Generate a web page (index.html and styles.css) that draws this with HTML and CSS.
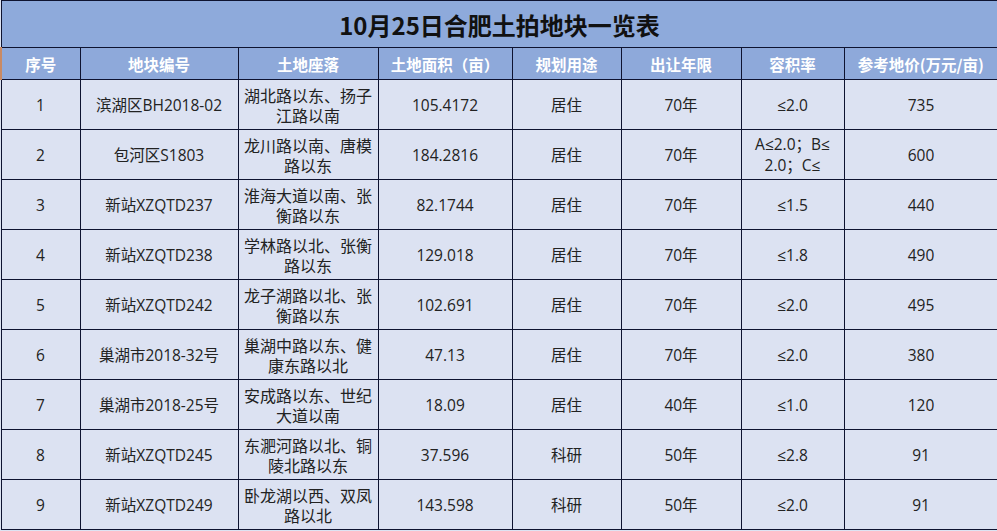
FILE: index.html
```html
<!DOCTYPE html>
<html lang="zh-CN">
<head>
<meta charset="utf-8">
<title>10月25日合肥土拍地块一览表</title>
<link rel="stylesheet" href="styles.css">
</head>
<body>
<table class="land">
  <colgroup>
    <col class="c1"><col class="c2"><col class="c3"><col class="c4"><col class="c5"><col class="c6"><col class="c7"><col class="c8">
  </colgroup>
  <thead>
    <tr class="title-row"><th colspan="8" class="title">10月25日合肥土拍地块一览表</th></tr>
    <tr class="head-row">
      <th class="first">序号</th><th>地块编号</th><th>土地座落</th><th>土地面积（亩）</th><th>规划用途</th><th>出让年限</th><th>容积率</th><th class="last">参考地价(万元/亩)</th>
    </tr>
  </thead>
  <tbody>
    <tr><td>1</td><td>滨湖区BH2018-02</td><td class="loc">湖北路以东、扬子江路以南</td><td>105.4172</td><td>居住</td><td>70年</td><td>≤2.0</td><td>735</td></tr>
    <tr><td>2</td><td>包河区S1803</td><td class="loc">龙川路以南、唐模路以东</td><td>184.2816</td><td>居住</td><td>70年</td><td class="far">A≤2.0；B≤<br>2.0；C≤</td><td>600</td></tr>
    <tr><td>3</td><td>新站XZQTD237</td><td class="loc">淮海大道以南、张衡路以东</td><td>82.1744</td><td>居住</td><td>70年</td><td>≤1.5</td><td>440</td></tr>
    <tr><td>4</td><td>新站XZQTD238</td><td class="loc">学林路以北、张衡路以东</td><td>129.018</td><td>居住</td><td>70年</td><td>≤1.8</td><td>490</td></tr>
    <tr><td>5</td><td>新站XZQTD242</td><td class="loc">龙子湖路以北、张衡路以东</td><td>102.691</td><td>居住</td><td>70年</td><td>≤2.0</td><td>495</td></tr>
    <tr><td>6</td><td>巢湖市2018-32号</td><td class="loc">巢湖中路以东、健康东路以北</td><td>47.13</td><td>居住</td><td>70年</td><td>≤2.0</td><td>380</td></tr>
    <tr><td>7</td><td>巢湖市2018-25号</td><td class="loc">安成路以东、世纪大道以南</td><td>18.09</td><td>居住</td><td>40年</td><td>≤1.0</td><td>120</td></tr>
    <tr><td>8</td><td>新站XZQTD245</td><td class="loc">东淝河路以北、铜陵北路以东</td><td>37.596</td><td>科研</td><td>50年</td><td>≤2.8</td><td>91</td></tr>
    <tr><td>9</td><td>新站XZQTD249</td><td class="loc">卧龙湖以西、双凤路以北</td><td>143.598</td><td>科研</td><td>50年</td><td>≤2.0</td><td>91</td></tr>
  </tbody>
</table>
</body>
</html>
```
FILE: styles.css
```css
html, body {
  margin: 0;
  padding: 0;
  background: #dde3f2;
}
body {
  font-family: "Open Sans", "Noto Sans CJK SC", sans-serif;
  color: #222;
}
.land {
  width: 997px;
  border-collapse: collapse;
  table-layout: fixed;
}
.c1 { width: 79px; }
.c2 { width: 158px; }
.c3 { width: 140px; }
.c4 { width: 134px; }
.c5 { width: 109px; }
.c6 { width: 120px; }
.c7 { width: 103px; }
.c8 { width: 154px; }

.land th, .land td {
  border: 1px solid #0e1330;
  padding: 0;
  text-align: center;
  vertical-align: middle;
  overflow: hidden;
}
.title-row th {
  height: 46px;
  background: #8eaadb;
  color: #111;
  font-family: "Noto Sans CJK SC", sans-serif;
  font-size: 24px;
  font-weight: 700;
  border-right-color: #8eaadb;
}
.head-row th {
  height: 31px;
  background: #8ea9da;
  color: #fff;
  font-family: "Noto Sans CJK SC", sans-serif;
  font-size: 15.5px;
  font-weight: 700;
}
.head-row th.first {
  border-left: 2px solid #c98a64;
}
.head-row th.last {
  border-right: 2px solid #c98a64;
}
.land td {
  height: 49px;
  background: #dce2f2;
  font-size: 15.5px;
  line-height: 20px;
}
.land td.loc {
  padding: 0 3px;
  font-family: "Noto Sans CJK SC", sans-serif;
  font-size: 16px;
}
.land td.far {
  line-height: 21px;
}
```
